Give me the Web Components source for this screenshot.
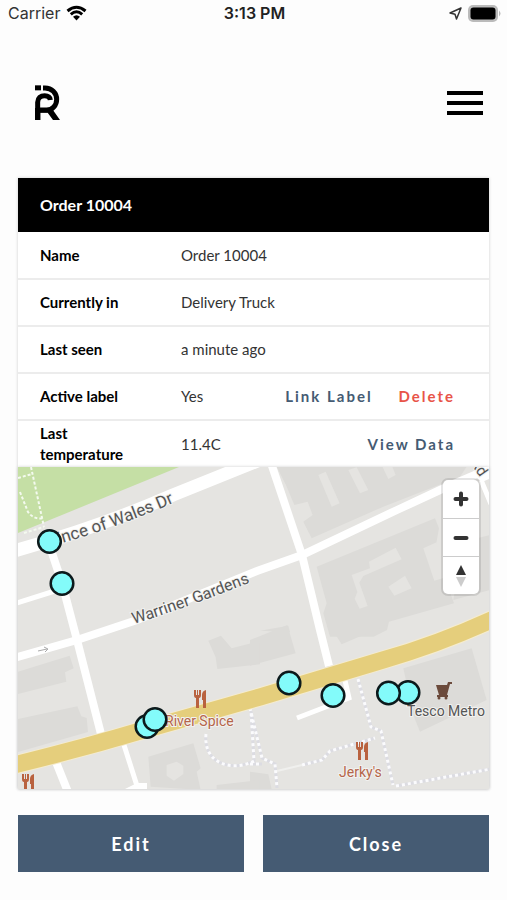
<!DOCTYPE html>
<html lang="en">
<head>
<meta charset="utf-8">
<meta name="viewport" content="width=device-width, initial-scale=1">
<title>Order 10004</title>
<style>
  body {
    margin: 0;
    background: #fdfdfd;
    color: #000;
    font-family: Lato, "Liberation Sans", sans-serif;
  }
</style>
</head>
<body>
<order-screen></order-screen>

<script>
const define = (name, html) => {
  customElements.define(name, class extends HTMLElement {
    constructor() {
      super();
      this.attachShadow({ mode: "open" }).innerHTML = html;
    }
  });
};

define("status-bar", `
<style>
  :host {
    display: grid;
    grid-template-columns: 1fr auto 1fr;
    align-items: center;
    height: 26px;
    padding: 0 6px 0 8px;
    font: 16px Inter, sans-serif;
    color: #333;
  }
  .left, .right { display: flex; align-items: center; gap: 6px; }
  .right { justify-content: flex-end; }
  b { font-weight: 600; color: #222; }
</style>
<span class="left">Carrier
  <svg width="21" height="16" viewBox="0 0 21 16" fill="none" stroke="#000" stroke-width="3">
    <path d="M1.5 6Q10.5-1.5 19.5 6M4.8 9.3Q10.5 4.3 16.2 9.3"/>
    <path d="M7 11.8Q10.5 8.8 14 11.8L10.5 15.5z" fill="#000" stroke="none"/>
  </svg>
</span>
<b>3:13 PM</b>
<span class="right">
  <svg width="13" height="13" viewBox="0 0 13 13" fill="none" stroke="#333" stroke-width="1.5" stroke-linejoin="round">
    <path d="M12 1L1 6l5 1.2L7.5 12z"/>
  </svg>
  <svg width="33" height="17" viewBox="0 0 33 17">
    <rect width="30" height="17" rx="5" fill="#bbb"/>
    <path d="M31 5.5q3 3 0 6z" fill="#bbb"/>
    <rect x="2.5" y="2.5" width="25" height="12" rx="3" fill="#000"/>
  </svg>
</span>
`);

define("app-header", `
<style>
  :host {
    box-sizing: border-box;
    display: flex;
    justify-content: space-between;
    align-items: center;
    height: 152px;
    padding: 2px 24px 0 34px;
  }
  a, button { display: flex; }
  button { background: none; border: 0; padding: 0; cursor: pointer; }
</style>
<a href="#" aria-label="Home">
  <svg width="28" height="38" viewBox="103 253 84 114" fill="none" stroke="#000" stroke-width="15">
    <path d="M106 257h18v15h-18z" fill="#000" stroke="none"/>
    <path d="M130 265h6c20 0 35 15 35 34s-13 32-30 32h-20"/>
    <path d="M114 361v-53c0-13 9-20 21-20 9 0 16 4 17 13"/>
    <path d="M106 325h50l8 12 17 24h-21l-16-22h-22v22h-16z" fill="#000" stroke="none"/>
  </svg>
</a>
<button aria-label="Menu">
  <svg width="36" height="26" viewBox="0 0 36 26"><path d="M0 1h36v4H0zM0 11h36v4H0zM0 21h36v4H0z"/></svg>
</button>
`);

define("text-button", `
<style>
  :host { display: inline-block; color: #455b73; }
  :host([danger]) { color: #e85448; }
  button {
    background: none;
    border: 0;
    padding: 0;
    color: inherit;
    font: 700 15px/21px Lato, sans-serif;
    letter-spacing: 2px;
    cursor: pointer;
  }
</style>
<button><slot></slot></button>
`);

define("solid-button", `
<style>
  :host { display: block; flex: 1; }
  button {
    width: 100%;
    height: 57px;
    border: 0;
    background: #455b73;
    color: #fff;
    font: 700 18px Lato, sans-serif;
    letter-spacing: 2px;
    cursor: pointer;
  }
</style>
<button><slot></slot></button>
`);

define("order-details", `
<style>
  :host { display: block; background: #fff; }
  table { width: 100%; border-collapse: collapse; font-size: 15px; line-height: 21px; }
  caption {
    box-sizing: border-box;
    height: 54px;
    padding: 0 22px;
    background: #000;
    color: #fff;
    font-size: 16px;
    font-weight: 700;
    line-height: 54px;
    text-align: left;
  }
  tr { height: 47px; }
  tr + tr { border-top: 2px solid #ececec; }
  th, td { padding: 0; text-align: left; }
  th { width: 97px; padding: 0 22px; font-weight: 700; }
  td { padding-left: 22px; color: #333; }
  .actions { padding: 0 34px 0 0; text-align: right; white-space: nowrap; }
  text-button + text-button { margin-left: 22px; }
</style>
<table>
  <caption>Order 10004</caption>
  <tr><th scope="row">Name</th><td colspan="2">Order 10004</td></tr>
  <tr><th scope="row">Currently in</th><td colspan="2">Delivery Truck</td></tr>
  <tr><th scope="row">Last seen</th><td colspan="2">a minute ago</td></tr>
  <tr>
    <th scope="row">Active label</th><td>Yes</td>
    <td class="actions"><text-button>Link Label</text-button> <text-button danger>Delete</text-button></td>
  </tr>
  <tr>
    <th scope="row">Last temperature</th><td>11.4C</td>
    <td class="actions"><text-button>View Data</text-button></td>
  </tr>
</table>
`);

define("map-controls", `
<style>
  :host {
    display: block;
    width: 36px;
    border-radius: 5px;
    background: #fff;
    box-shadow: 0 0 0 2px rgba(0, 0, 0, .1);
    overflow: hidden;
  }
  button {
    display: grid;
    place-items: center;
    width: 100%;
    height: 38px;
    padding: 0;
    border: 0;
    background: none;
    cursor: pointer;
  }
  button + button { border-top: 1px solid #ccc; }
</style>
<button aria-label="Zoom in"><svg width="16" height="16" viewBox="0 0 16 16" stroke="#333" stroke-width="4" stroke-linecap="round"><path d="M8 2.5v11M2.5 8h11"/></svg></button>
<button aria-label="Zoom out"><svg width="16" height="16" viewBox="0 0 16 16" stroke="#333" stroke-width="4" stroke-linecap="round"><path d="M2.5 8h11"/></svg></button>
<button aria-label="Reset bearing to north"><svg width="10" height="22" viewBox="0 0 10 22"><path d="M5 0l5 10H0z" fill="#333"/><path d="M0 12h10L5 22z" fill="#ccc"/></svg></button>
`);

define("location-map", `
<style>
  :host { display: block; position: relative; height: 322px; overflow: hidden; box-shadow: 0 0 3px #ccc; }
  .map { display: block; width: 100%; height: 100%; font-family: Roboto, sans-serif; }
  map-controls { position: absolute; top: 13px; right: 10px; }
</style>
<svg class="map" viewBox="18 467 471 322" preserveAspectRatio="xMidYMid slice" role="img" aria-label="Locations of Order 10004">
  <defs>
    <g id="food">
      <path d="M1 0v5q0 3 2 3v10h3V8q2 0 2-3V0H6v5H5V0H4v5H3V0zM13 0q-4 1-4 5v5h1v8h3z"/>
    </g>
    <path id="wales" d="M59 544Q122 526 180 500"/>
    <path id="warriner" d="M134 624Q192 606 256 580"/>
    <path id="paths" d="M250 708l12 50 13 6 2 24M358 679l13 48 10 4 12 54M396 786l95-17M302 765l20-5 8-9 45-13M250 764h12M206 734c-3 30 26 38 48 27l-3-50"/>
  </defs>
  <path d="M18 467h474v323H18z" fill="#e5e4e1"/>
  <path d="M18 467h161L18 533z" fill="#c5dfa5"/>

  <!-- buildings, traced at 3x -->
  <g fill="#dcdbd8">
    <g transform="translate(250 460) scale(.3333)">
      <path d="M80 20h570l-20 30-140 55-90 35-215 95-25-50 28-20-15-40-40 10-25-60z"/>
      <path d="M200 320l355-145 12 30-10 55 30 100 25 70-195 55-6 25-40 20H240l-20-70 10-30z"/>
      <path d="M640 245l80-20v165l-110 30z"/>
      <path d="M30 512l85-15 5 20z"/>
      <g fill="#e5e4e1">
        <path d="M205 45l22-10 42 95-24 10zM295 30l25-8 35 68-25 10zM395 15h30l12 30-22 12z"/>
        <path d="M305 345l55-20-3-20 80-42 18 35-115 50-12 20 25 70-24 8-15-30 8-20z"/>
        <path d="M415 380l50-33 20 38-52 22zM520 265l40-18 28 105-35 10z"/>
      </g>
    </g>
    <g transform="translate(250 620) scale(.3333)">
      <path d="M0 60l112-45 25 85-137 37z"/>
      <path d="M235 10l10-20h165v25l-135 58z"/>
      <path d="M460 145l205-60 45 155-200 95-18-45z"/>
      <path d="M0 455l55 8 10 45H0z"/>
    </g>
    <g transform="translate(10 620) scale(.3333)">
      <path d="M24 155l155-48 12 38-26 12 4 28-145 37z"/>
      <path d="M24 297l178-38 12 30 16 5 4 42-210 60z"/>
      <path d="M595 62l38-15 32 38 85-22v70l-128 14-5-35z"/>
      <path d="M415 410l135-40 22 75-12 10 12 55-150-10z"/>
      <path d="M620 495l130-15v30H620z"/>
      <path d="M470 435l30-10 20 12v25l-28 20-22-15z" fill="#e5e4e1"/>
    </g>
  </g>

  <!-- footpaths -->
  <g fill="none" stroke-width="3">
    <path d="M31 467l13 60M18 478l14-4M20 492l8 20q6 8 15 6M24 533l20-6" stroke="#f4faef" stroke-width="2" stroke-dasharray="3 2"/>
    <use href="#paths" stroke="#dcdce2"/>
    <use href="#paths" stroke="#fbfbfd" stroke-dasharray="3 3"/>
    <path d="M277 771l25-6" stroke="#f0f0ee" stroke-width="2"/>
  </g>

  <!-- streets -->
  <g fill="none" stroke="#fff" stroke-width="8">
    <path d="M14 551Q100 527 173 495L260 460" stroke-width="13"/>
    <path d="M14 658l63-18 60-20 120-49 45-16 95-45 43-20 60-26"/>
    <path d="M48 541l14 42 15 57 24 94"/>
    <path d="M270 460l32 95 18 75 9 36"/>
    <path d="M14 604l44-14M344 676l5 22-52 20M124 745l14 44M481 480l10 24" stroke-width="5"/>
    <path d="M56 762l12 30"/>
    <path d="M123 790l14-7h10v7z" fill="#fff" stroke="none"/>
  </g>
  <path d="M480 467h14v10l-12 5-8-7z" fill="#fff"/>
  <path d="M38 651l9-2m-3-2l4 2-3 3" fill="none" stroke="#aaa"/>
  <path d="M10 766Q80 749 147 729L260 697 383 660Q440 644 500 616" fill="none" stroke="#f5eccf" stroke-width="19"/>
  <path d="M10 766Q80 749 147 729L260 697 383 660Q440 644 500 616" fill="none" stroke="#e5ce7c" stroke-width="17"/>

  <g fill="#555" stroke="#f2f2f0" stroke-width="2" paint-order="stroke">
    <text font-size="17"><textPath href="#wales">ince of Wales Dr</textPath></text>
    <text font-size="16"><textPath href="#warriner">Warriner Gardens</textPath></text>
    <text x="407" y="716" font-size="14">Tesco Metro</text>
    <text transform="translate(470 463) rotate(55)" font-size="15">Rd</text>
    <g fill="#b5654a">
      <text x="165" y="726" font-size="14">River Spice</text>
      <text x="339" y="777" font-size="14">Jerky's</text>
    </g>
  </g>
  <g fill="#b9623f">
    <use href="#food" x="193" y="690"/>
    <use href="#food" x="355" y="742"/>
    <use href="#food" x="21" y="774"/>
  </g>
  <g fill="#6c4b3c">
    <path d="M436 685h11l1-3h4v2h-2l-3 11h1v2h-11v-2h2z"/>
    <circle cx="439" cy="698" r="1.5"/><circle cx="446" cy="698" r="1.5"/>
  </g>

  <g fill="#83fbfa" stroke="#0c1a1c" stroke-width="2.5">
    <circle cx="49.5" cy="541.5" r="11.3"/>
    <circle cx="62" cy="583.5" r="11.3"/>
    <circle cx="147" cy="726.5" r="11.3"/>
    <circle cx="155" cy="719.5" r="11.3"/>
    <circle cx="289" cy="683" r="11.3"/>
    <circle cx="333" cy="695.5" r="11.3"/>
    <circle cx="408" cy="692.5" r="11.3"/>
    <circle cx="388.5" cy="693" r="11.3"/>
  </g>
</svg>
<map-controls></map-controls>
`);

define("order-screen", `
<style>
  :host { display: block; }
  main { padding: 0 18px 28px; }
  .card { box-shadow: 0 0 3px #ccc; }
  .footer { display: flex; gap: 19px; margin-top: 26px; }
</style>
<status-bar></status-bar>
<app-header></app-header>
<main>
  <div class="card">
    <order-details></order-details>
    <location-map></location-map>
  </div>
  <div class="footer">
    <solid-button>Edit</solid-button>
    <solid-button>Close</solid-button>
  </div>
</main>
`);
</script>
</body>
</html>
